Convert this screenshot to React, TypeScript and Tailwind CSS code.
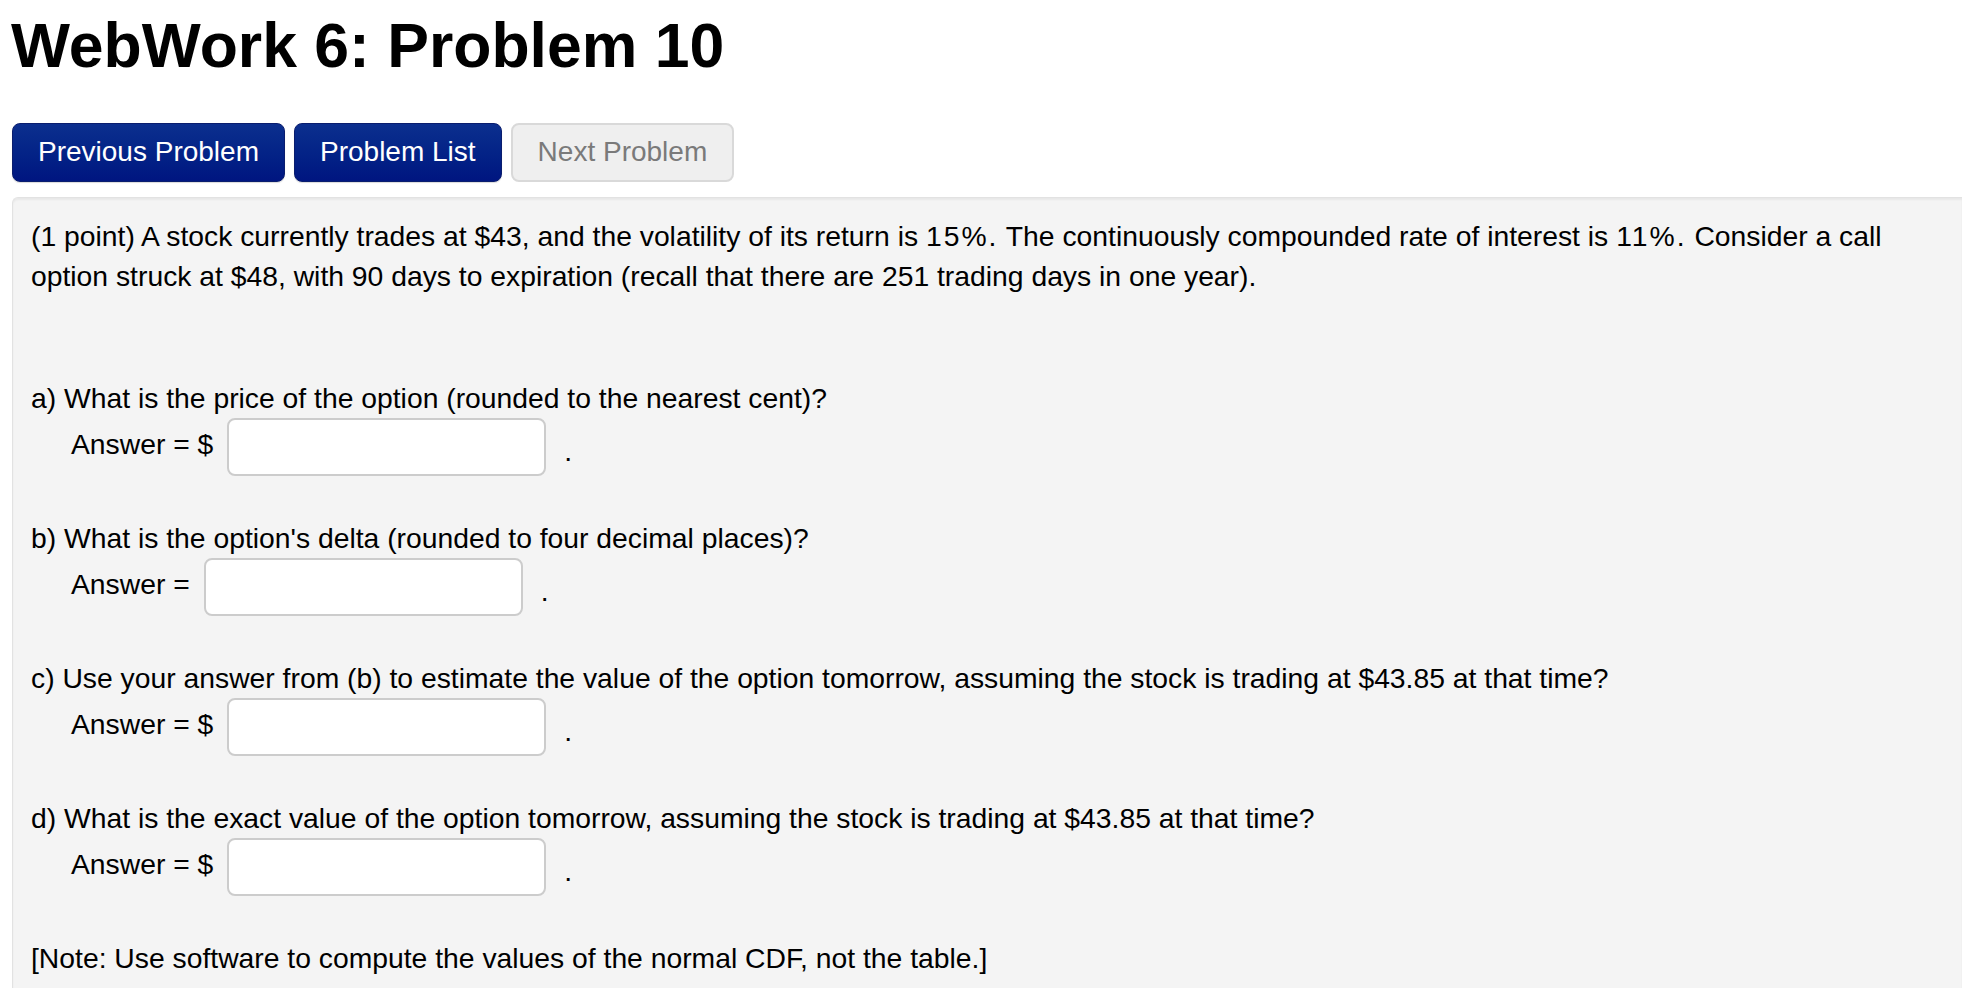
import React from "react";

const font = "font-['Liberation_Sans','Helvetica_Neue',Arial,sans-serif]";

function NavButton({ label, disabled }: { label: string; disabled?: boolean }) {
  return (
    <button
      className={
        disabled
          ? "h-[59px] px-[25px] rounded-[8px] border-2 border-[#d9d9d9] bg-[#efefef] text-[28px] text-[#7a7a7a]"
          : "h-[59px] px-[25px] rounded-[8px] border border-[#0a1d6e] bg-gradient-to-b from-[#0c2f8e] to-[#001580] text-[28px] text-white shadow-[0_1px_1px_rgba(0,0,0,0.15)]"
      }
    >
      {label}
    </button>
  );
}

function AnswerRow({ dollar }: { dollar?: boolean }) {
  return (
    <div className="flex h-[58px] items-center pl-[40px]">
      <span className="-translate-y-[3px]">Answer ={dollar ? " $" : ""}</span>
      <input
        type="text"
        className="ml-[14px] h-[58px] w-[319px] rounded-[8px] border-2 border-[#cccccc] bg-white outline-none"
      />
      <span className="ml-[18px] translate-y-[4px]">.</span>
    </div>
  );
}

function Question({ text, dollar }: { text: string; dollar?: boolean }) {
  return (
    <div className="mt-[42px] first:mt-0">
      <p>{text}</p>
      <AnswerRow dollar={dollar} />
    </div>
  );
}

export default function App() {
  return (
    <div className={`${font} min-h-screen bg-white text-black`}>
      <h1 className="pl-[11px] pt-[14px] text-[62.5px] font-bold leading-none">
        WebWork 6: Problem 10
      </h1>

      {/* navigation */}
      <div className="mt-[46px] flex gap-[9px] pl-[12px]">
        <NavButton label="Previous Problem" />
        <NavButton label="Problem List" />
        <NavButton label="Next Problem" disabled />
      </div>

      {/* problem body */}
      <div className="ml-[12px] mt-[15px] min-h-[800px] rounded-tl-[6px] border border-r-0 border-[#e2e2e2] bg-[#f4f4f4] pl-[18px] pr-[40px] pt-[18px] text-[28.3px] leading-[40px] shadow-[inset_0_2px_2px_rgba(0,0,0,0.05)]">
        <p>
          (1 point) A stock currently trades at $43, and the volatility of its return is{" "}
          <span className="tracking-[2px]">15%.</span> The continuously compounded rate of interest is{" "}
          <span className="tracking-[2px]">11%.</span> Consider a call option struck at $48, with 90 days
          to expiration (recall that there are 251 trading days in one year).
        </p>

        <div className="mt-[82px]">
          <Question text="a) What is the price of the option (rounded to the nearest cent)?" dollar />
          <Question text="b) What is the option's delta (rounded to four decimal places)?" />
          <Question
            text="c) Use your answer from (b) to estimate the value of the option tomorrow, assuming the stock is trading at $43.85 at that time?"
            dollar
          />
          <Question
            text="d) What is the exact value of the option tomorrow, assuming the stock is trading at $43.85 at that time?"
            dollar
          />
        </div>

        <p className="mt-[42px]">[Note: Use software to compute the values of the normal CDF, not the table.]</p>
      </div>
    </div>
  );
}
